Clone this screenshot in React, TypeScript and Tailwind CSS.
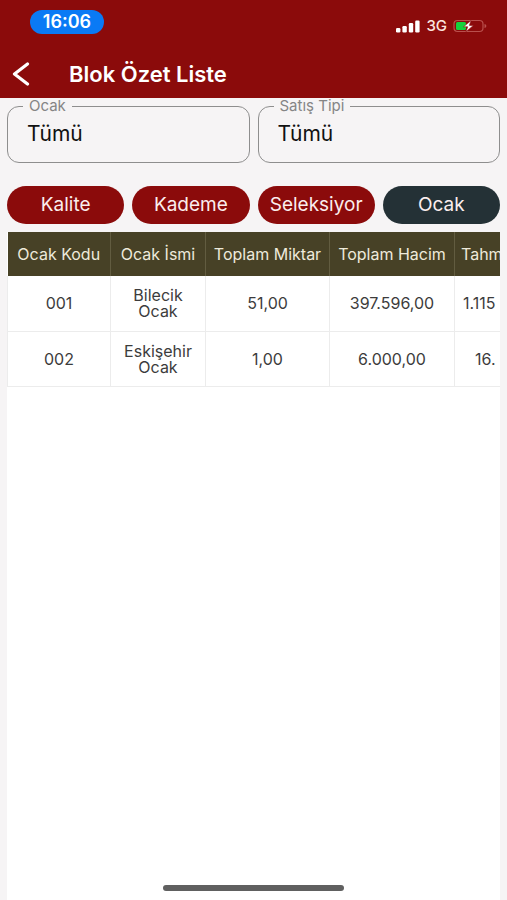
import React, { useState } from "react";

const tabs = ["Kalite", "Kademe", "Seleksiyor", "Ocak"];

const rows = [
  { code: "001", name: "Bilecik Ocak", amount: "51,00", volume: "397.596,00", estimate: "1.115", pad: "pl-2" },
  { code: "002", name: "Eskişehir Ocak", amount: "1,00", volume: "6.000,00", estimate: "16.", pad: "pl-5" },
];

function StatusBar() {
  return (
    <div className="flex h-12 items-start justify-between pt-[10px] pr-5 pl-[30px]">
      <div className="flex h-6 w-[74px] items-center justify-center rounded-full bg-[#0a7af5] text-[18px] leading-6 font-semibold">
        16:06
      </div>
      <div className="mt-2 flex items-center gap-[6px]">
        <svg width="24" height="13" viewBox="0 0 24 13" fill="#fff" aria-hidden="true">
          <rect x="0" y="8" width="4.4" height="4.5" rx="1.2" />
          <rect x="6.4" y="6" width="4.4" height="6.5" rx="1.2" />
          <rect x="12.8" y="3" width="4.4" height="9.5" rx="1.2" />
          <rect x="19.2" y="0.5" width="4.4" height="12" rx="1.2" />
        </svg>
        <span className="text-[15px] leading-4 font-medium text-[#fbe3df]">3G</span>
        <svg width="34" height="14" viewBox="0 0 34 14" aria-hidden="true">
          <rect x="1" y="1.5" width="29" height="11" rx="3.5" fill="none" stroke="#b9504d" strokeWidth="1.2" />
          <path d="M31.5 5v4c1.2-.4 1.8-1.1 1.8-2s-.6-1.6-1.8-2z" fill="#b9504d" />
          <rect x="3" y="3" width="10" height="8" rx="1.5" fill="#14d23c" />
          <path d="M18 1.5 10.5 7.8h4.2L13 12.8l7.4-6.4h-4z" fill="#fff" stroke="#8b0b0b" strokeWidth="0.6" />
        </svg>
      </div>
    </div>
  );
}

function SelectField({ id, label }: { id: string; label: string }) {
  return (
    <fieldset className="min-w-0 rounded-xl border border-[#8e8e8e] pl-[15px]">
      <legend className="px-[6px] text-[15px] leading-4 text-[#858585]">
        <label htmlFor={id}>{label}</label>
      </legend>
      <select
        id={id}
        className="mb-2 block h-10 w-full appearance-none bg-transparent pl-1 text-[21px] leading-6 text-[#111] outline-none"
      >
        <option>Tümü</option>
      </select>
    </fieldset>
  );
}

export default function App() {
  const [active, setActive] = useState("Ocak");

  return (
    <div className="flex min-h-screen flex-col bg-[#f6f4f5] font-['Inter','Liberation_Sans',sans-serif]">
      <header className="h-[98px] bg-[#8b0b0b] text-white">
        <StatusBar />
        <div className="flex h-[52px] items-center pl-3">
          <button type="button" aria-label="Geri" className="w-[57px]">
            <svg width="18" height="24" viewBox="0 0 18 24" fill="none" stroke="#fff" strokeWidth="3.2" strokeLinecap="round" strokeLinejoin="round">
              <path d="M15.5 2 2.5 12l13 10" />
            </svg>
          </button>
          <h1 className="text-[22px] leading-7 font-semibold">Blok Özet Liste</h1>
        </div>
      </header>

      <main className="flex flex-1 flex-col px-[7px]">
        <div className="grid grid-cols-2 gap-2">
          <SelectField id="ocak" label="Ocak" />
          <SelectField id="satis-tipi" label="Satış Tipi" />
        </div>

        <div className="mt-[23px] grid grid-cols-4 gap-2">
          {tabs.map((tab) => (
            <button
              key={tab}
              type="button"
              onClick={() => setActive(tab)}
              className={`h-[38px] overflow-hidden rounded-full text-[19px] leading-6 whitespace-nowrap text-[#fbeeee] ${
                tab === active ? "bg-[#243136]" : "bg-[#8b0b0b]"
              }`}
            >
              {tab}
            </button>
          ))}
        </div>

        <div className="mt-2 flex flex-1 flex-col overflow-hidden bg-white">
          <table className="w-full table-fixed border-collapse text-center text-[16px] leading-4 text-[#3c3c3c]">
            <colgroup>
              <col className="w-[103px]" />
              <col className="w-[95px]" />
              <col className="w-[124px]" />
              <col className="w-[125px]" />
              <col />
            </colgroup>
            <thead>
              <tr className="h-11 bg-[#474126] whitespace-nowrap text-[#eeeadb]">
                <th className="border-r border-[#625c40] font-normal">Ocak Kodu</th>
                <th className="border-r border-[#625c40] font-normal">Ocak İsmi</th>
                <th className="border-r border-[#625c40] font-normal">Toplam Miktar</th>
                <th className="border-r border-[#625c40] font-normal">Toplam Hacim</th>
                <th className="overflow-hidden pl-[6px] text-left font-normal">Tahm</th>
              </tr>
            </thead>
            <tbody>
              {rows.map((row) => (
                <tr key={row.code} className="h-[55px] border-b border-[#ececec]">
                  <td className="border-x border-[#ececec]">{row.code}</td>
                  <td className="border-r border-[#ececec] px-2">{row.name}</td>
                  <td className="border-r border-[#ececec]">{row.amount}</td>
                  <td className="border-r border-[#ececec]">{row.volume}</td>
                  <td className={`overflow-hidden text-left whitespace-nowrap ${row.pad}`}>{row.estimate}</td>
                </tr>
              ))}
            </tbody>
          </table>
          <div className="mx-auto mt-auto mb-[9px] h-[6px] w-[181px] rounded-full bg-[#606060]" />
        </div>
      </main>
    </div>
  );
}
